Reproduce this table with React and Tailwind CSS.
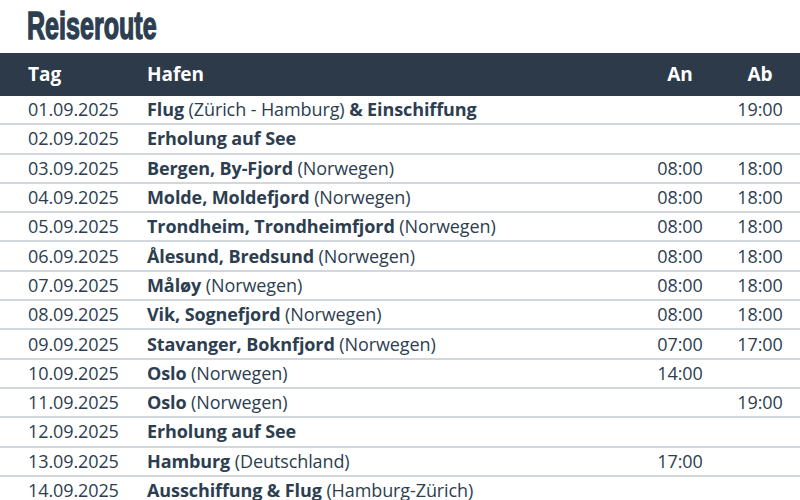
const rows = [
  { tag: "01.09.2025", bold: "Flug", rest: " (Zürich - Hamburg) ", bold2: "& Einschiffung", an: "", ab: "19:00" },
  { tag: "02.09.2025", bold: "Erholung auf See", rest: "", an: "", ab: "" },
  { tag: "03.09.2025", bold: "Bergen, By-Fjord", rest: " (Norwegen)", an: "08:00", ab: "18:00" },
  { tag: "04.09.2025", bold: "Molde, Moldefjord", rest: " (Norwegen)", an: "08:00", ab: "18:00" },
  { tag: "05.09.2025", bold: "Trondheim, Trondheimfjord", rest: " (Norwegen)", an: "08:00", ab: "18:00" },
  { tag: "06.09.2025", bold: "Ålesund, Bredsund", rest: " (Norwegen)", an: "08:00", ab: "18:00" },
  { tag: "07.09.2025", bold: "Måløy", rest: " (Norwegen)", an: "08:00", ab: "18:00" },
  { tag: "08.09.2025", bold: "Vik, Sognefjord", rest: " (Norwegen)", an: "08:00", ab: "18:00" },
  { tag: "09.09.2025", bold: "Stavanger, Boknfjord", rest: " (Norwegen)", an: "07:00", ab: "17:00" },
  { tag: "10.09.2025", bold: "Oslo", rest: " (Norwegen)", an: "14:00", ab: "" },
  { tag: "11.09.2025", bold: "Oslo", rest: " (Norwegen)", an: "", ab: "19:00" },
  { tag: "12.09.2025", bold: "Erholung auf See", rest: "", an: "", ab: "" },
  { tag: "13.09.2025", bold: "Hamburg", rest: " (Deutschland)", an: "17:00", ab: "" },
  { tag: "14.09.2025", bold: "Ausschiffung & Flug", rest: " (Hamburg-Zürich)", an: "", ab: "" },
];

export default function App() {
  return (
    <div className="w-[800px] h-[500px] overflow-hidden bg-white text-[#2c3e50] font-['Open_Sans',sans-serif]">
      {/* Title */}
      <div className="h-[53px] pl-[27px] pt-[5px]">
        <h1 className="inline-block text-[38px] leading-[42px] font-bold font-['Liberation_Sans',sans-serif] [transform:scaleX(0.66)] origin-left [-webkit-text-stroke:1.4px_#2c3e50]">
          Reiseroute
        </h1>
      </div>

      {/* Header */}
      <div className="flex h-[43px] items-center bg-[#2c3a4a] text-white text-[19px] font-bold">
        <div className="w-[147px] pl-[28px]">Tag</div>
        <div className="flex-1">Hafen</div>
        <div className="w-[80px] text-center">An</div>
        <div className="w-[80px] text-center">Ab</div>
      </div>

      {/* Rows */}
      {rows.map((r) => (
        <div key={r.tag} className="flex h-[29.3px] items-center border-b-[2px] border-[#d3d6da] text-[18px] tracking-[-0.1px]">
          <div className="w-[147px] pl-[28px]">{r.tag}</div>
          <div className="flex-1 whitespace-nowrap">
            <span className="font-bold">{r.bold}</span>
            {r.rest}
            {r.bold2 && <span className="font-bold">{r.bold2}</span>}
          </div>
          <div className="w-[80px] text-center">{r.an}</div>
          <div className="w-[80px] text-center">{r.ab}</div>
        </div>
      ))}
    </div>
  );
}
